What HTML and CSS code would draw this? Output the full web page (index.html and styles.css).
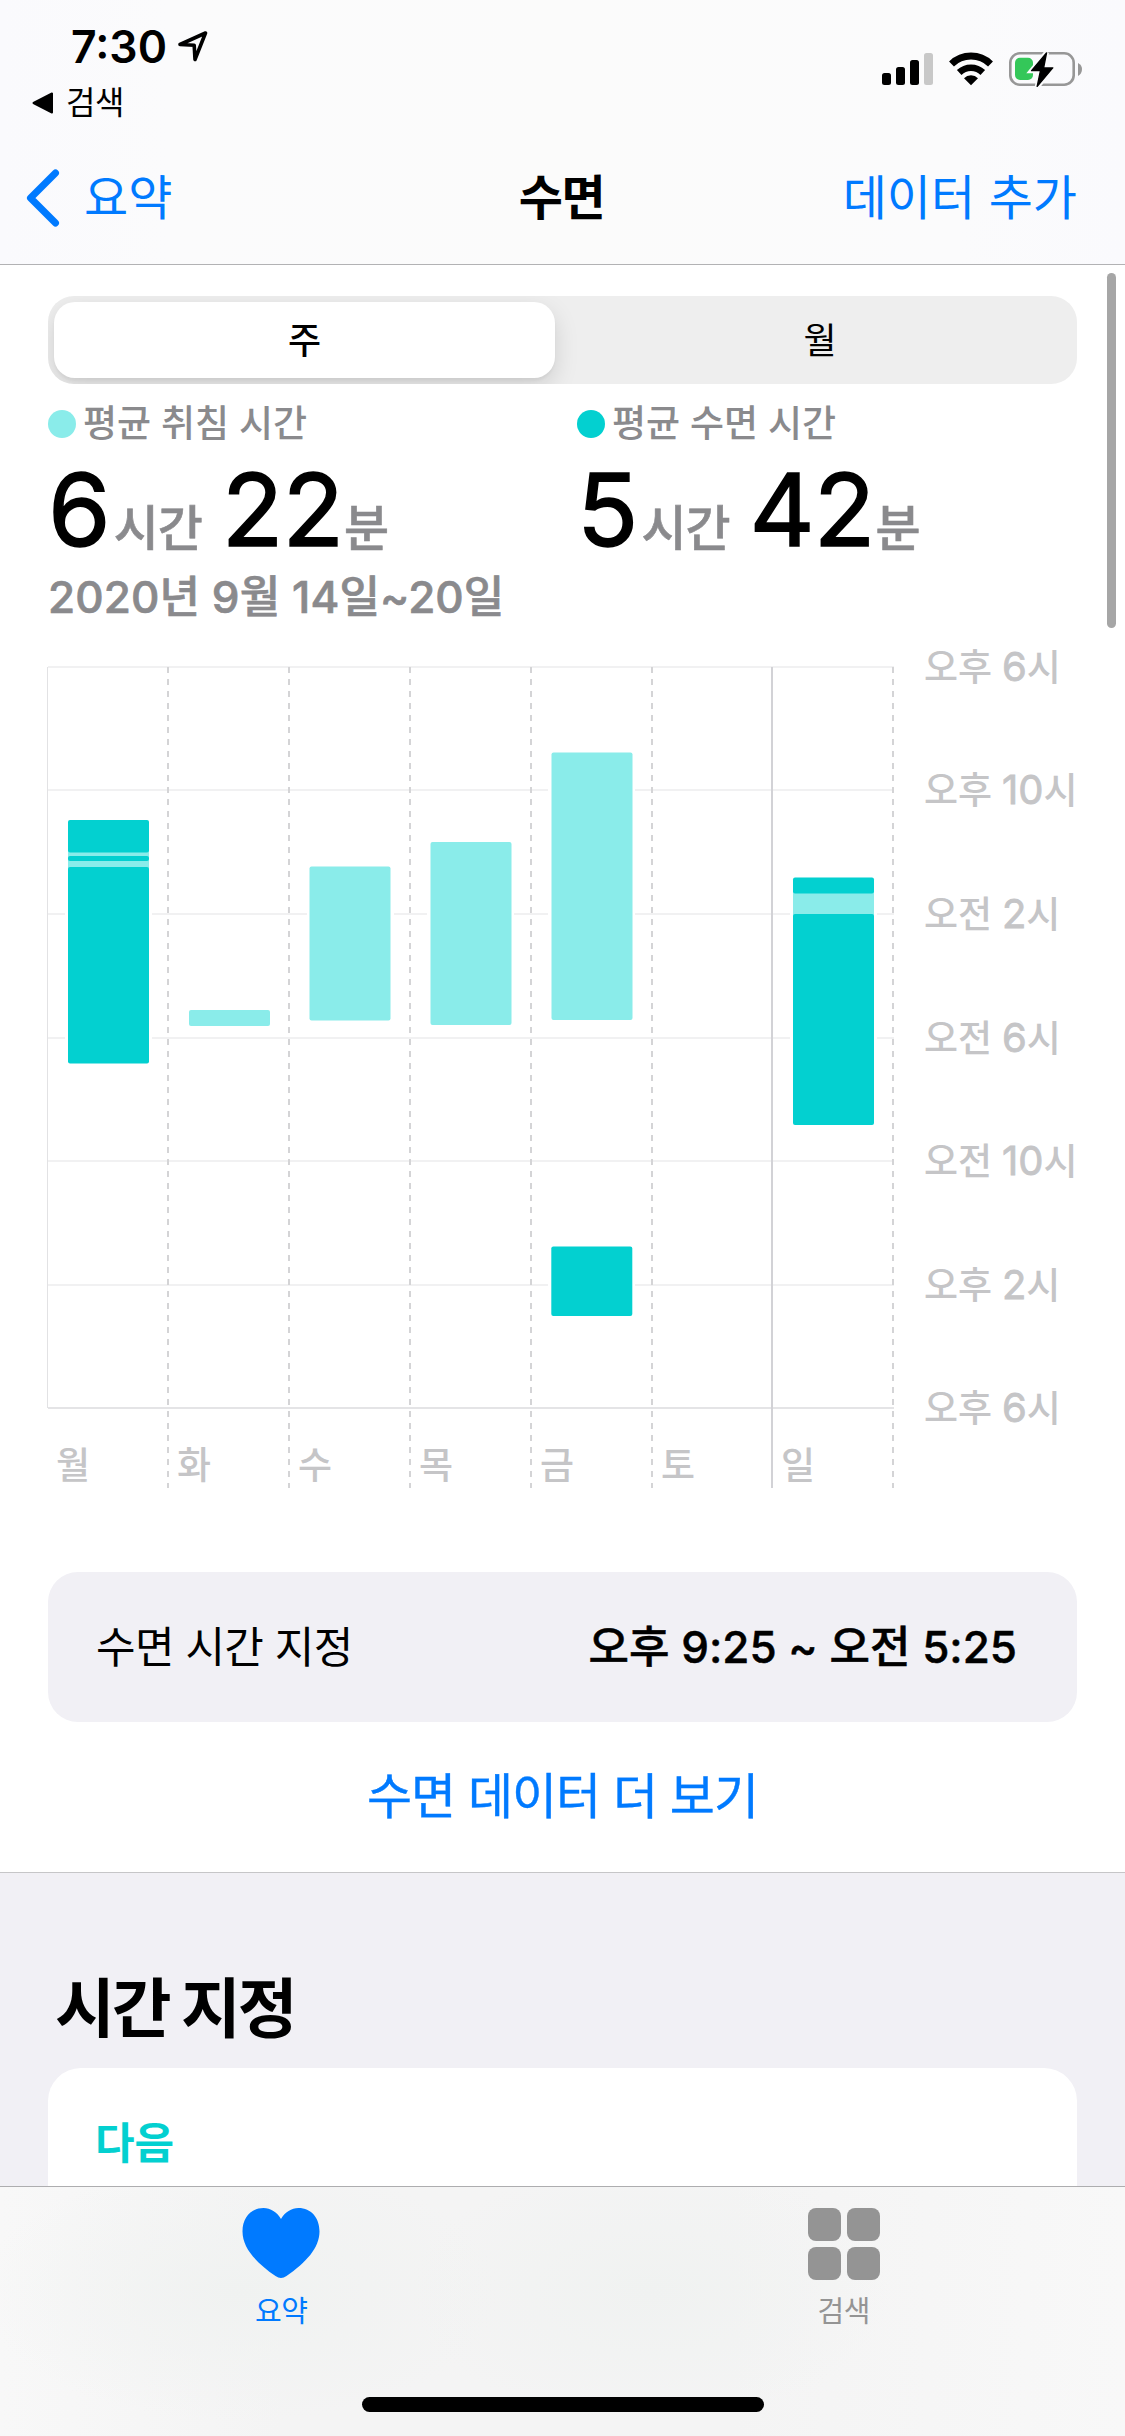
FILE: index.html
```html
<!DOCTYPE html>
<html lang="ko">
	<head>
		<meta charset="UTF-8">
		<title>수면</title>
		<link rel="stylesheet" href="styles.css">
	</head>
	<body>
		<div class="phone">
			<header class="header">
				<div class="status">
					<div class="status-left">
						<div class="clock">
							<span>7:30</span>
							<svg width="30" height="31" viewBox="0 0 30 31">
								<path d="M2 13.5 L27.5 2 L17 28.5 L16.2 14.3 Z" fill="none" stroke="#000" stroke-width="3.6" stroke-linejoin="round"/>
							</svg>
						</div>
						<div class="back-app">
							<svg width="22" height="22" viewBox="0 0 22 22">
								<path d="M1.5 11 L20 1.5 V20.5 Z" stroke="#000" stroke-width="2" stroke-linejoin="round"/>
							</svg>
							<span>검색</span>
						</div>
					</div>
					<div class="status-right">
						<svg width="51" height="36" viewBox="0 0 51 36">
							<rect x="0" y="22" width="9" height="12" rx="2.5"/>
							<rect x="14" y="16" width="9" height="18" rx="2.5"/>
							<rect x="28" y="9" width="9" height="25" rx="2.5"/>
							<rect x="42" y="2" width="9" height="32" rx="2.5" fill="#c8c8c8"/>
						</svg>
						<svg width="46" height="36" viewBox="0 0 46 36">
							<path d="M3.5 13 A28 28 0 0 1 42.5 13" fill="none" stroke="#000" stroke-width="7"/>
							<path d="M11.2 21.5 A17 17 0 0 1 34.8 21.5" fill="none" stroke="#000" stroke-width="6.6"/>
							<path d="M23 34.3 L16 27.2 A10 10 0 0 1 30 27.2 Z"/>
						</svg>
						<svg width="74" height="36" viewBox="0 0 74 36">
							<rect x="1.3" y="2.3" width="63.4" height="31.4" rx="9.5" fill="none" stroke="#979797" stroke-width="2.6"/>
							<rect x="6" y="6.7" width="18" height="22.3" rx="5" fill="#34c759"/>
							<path d="M69 12 Q73 14 73 18 Q73 23 69 25 Z" fill="#979797"/>
							<path d="M37.5 1.6 L22.6 19.8 H31.5 L28.2 36 L43.7 16.7 H34.6 Z" fill="#000" stroke="#fbfbfc" stroke-width="5"/>
							<path d="M37.5 2 L22.6 19.6 H31.5 L28.2 35.4 L43.7 16.9 H34.6 Z" stroke="#000" stroke-width="1.4" stroke-linejoin="round"/>
						</svg>
					</div>
				</div>
				<nav class="nav">
					<a class="nav-back">
						<svg width="34" height="58" viewBox="0 0 34 58">
							<path d="M29.5 4 L4.5 29 L29.5 54" fill="none" stroke="#007aff" stroke-width="7" stroke-linecap="round" stroke-linejoin="round"/>
						</svg>
						<span>요약</span>
					</a>
					<h1>수면</h1>
					<a class="nav-add">데이터 추가</a>
				</nav>
			</header>

			<main class="content">
				<div class="segment">
					<div class="segment-item active">주</div>
					<div class="segment-item">월</div>
				</div>

				<div class="stats">
					<div class="stat">
						<div class="stat-label"><i class="dot light"></i>평균 취침 시간</div>
						<div class="stat-value">6<small>시간</small><b>22</b><small>분</small></div>
					</div>
					<div class="stat">
						<div class="stat-label"><i class="dot"></i>평균 수면 시간</div>
						<div class="stat-value">5<small>시간</small><b>42</b><small>분</small></div>
					</div>
				</div>
				<div class="date">2020년 9월 14일~20일</div>

				<svg class="chart" width="1125" height="872" viewBox="0 630 1125 872">
					<g class="grid">
						<path d="M48 667H894M48 790H894M48 914H894M48 1038H894M48 1161H894M48 1285H894"/>
						<path class="edge" d="M47.5 667V1408"/>
						<path class="base" d="M48 1408H894"/>
						<path class="dash" d="M168 667V1488M289 667V1488M410 667V1488M531 667V1488M652 667V1488M893 667V1488"/>
						<path class="week" d="M772 667V1488"/>
					</g>
					<!-- 막대 주위 흰 여백 -->
					<g fill="#fff">
						<rect x="65" y="817" width="87" height="250"/>
						<rect x="307" y="863" width="87" height="160"/>
						<rect x="427" y="839" width="87" height="189"/>
						<rect x="548" y="749" width="87" height="274"/>
						<rect x="548" y="1243" width="87" height="76"/>
						<rect x="790" y="874" width="87" height="254"/>
					</g>
					<g class="in-bed">
						<rect x="68" y="850" width="81" height="20"/>
						<rect x="189" y="1010" width="81" height="16" rx="2"/>
						<rect x="309.5" y="866.5" width="81" height="154" rx="2"/>
						<rect x="430.5" y="842" width="81" height="183" rx="2"/>
						<rect x="551.5" y="752.5" width="81" height="267.5" rx="2"/>
						<rect x="793" y="890" width="81" height="28"/>
					</g>
					<g class="asleep">
						<rect x="68" y="820" width="81" height="32.5" rx="2"/>
						<rect x="68" y="856" width="81" height="5" rx="2"/>
						<rect x="68" y="867" width="81" height="196.5" rx="2"/>
						<rect x="551.3" y="1246.5" width="81" height="69.5" rx="2"/>
						<rect x="793" y="877.5" width="81" height="16" rx="2"/>
						<rect x="793" y="914" width="81" height="211" rx="2"/>
					</g>
					<g class="hours">
						<text x="924" y="681">오후 <tspan>6</tspan>시</text>
						<text x="924" y="804">오후 <tspan>10</tspan>시</text>
						<text x="924" y="928">오전 <tspan>2</tspan>시</text>
						<text x="924" y="1052">오전 <tspan>6</tspan>시</text>
						<text x="924" y="1175">오전 <tspan>10</tspan>시</text>
						<text x="924" y="1299">오후 <tspan>2</tspan>시</text>
						<text x="924" y="1422">오후 <tspan>6</tspan>시</text>
					</g>
					<g class="days">
						<text x="56" y="1479">월</text>
						<text x="177" y="1479">화</text>
						<text x="298" y="1479">수</text>
						<text x="419" y="1479">목</text>
						<text x="540" y="1479">금</text>
						<text x="661" y="1479">토</text>
						<text x="781" y="1479">일</text>
					</g>
				</svg>

				<div class="schedule">
					<span>수면 시간 지정</span>
					<strong>오후 9:25 ~ 오전 5:25</strong>
				</div>
				<a class="more">수면 데이터 더 보기</a>

				<section class="next">
					<h2>시간 지정</h2>
					<div class="next-card">다음</div>
				</section>
			</main>

			<footer class="tabbar">
				<a class="tab active">
					<svg width="78" height="72" viewBox="0 0 78 72">
						<path d="M39 11 C35 4 28.500 0 21.500 0 C9 0 .5 9.500 .5 23.500 C.5 40 14 54.500 33.500 68 Q39 72 44.500 68 C64 54.500 77.500 40 77.500 23.500 C77.500 9.500 69 0 56.500 0 C49.500 0 43 4 39 11 Z" fill="#007aff"/>
					</svg>
					<span>요약</span>
				</a>
				<a class="tab">
					<svg width="72" height="72" viewBox="0 0 72 72" fill="#949494">
						<rect x="0" y="0" width="33" height="33" rx="8"/>
						<rect x="39" y="0" width="33" height="33" rx="8"/>
						<rect x="0" y="39" width="33" height="33" rx="8"/>
						<rect x="39" y="39" width="33" height="33" rx="8"/>
					</svg>
					<span>검색</span>
				</a>
				<div class="home"></div>
			</footer>
			<div class="scrollbar"></div>
		</div>
	</body>
</html>
```
FILE: styles.css
```css
*{
	margin: 0;
	padding: 0;
	box-sizing: border-box;
}
body{
	font-family: Inter, "Noto Sans CJK KR", sans-serif;
	color: #000;
	background: #fff;
}
svg{
	display: block;
	flex-shrink: 0;
}
.phone{
	width: 1125px;
	height: 2436px;
	position: relative;
	overflow: hidden;
	display: flex;
	flex-direction: column;
}

/* 상단 */
.header{
	height: 265px;
	flex-shrink: 0;
	background: linear-gradient(90deg, #fafafd, #fbfbfc 15%, #fbfbfb 50%, #fbfbfc 85%, #fafafd);
	border-bottom: 1px solid #b2b2b4;
}
.status{
	height: 132px;
	display: flex;
	justify-content: space-between;
	padding: 21px 42px 0 32px;
}
.clock{
	display: flex;
	align-items: center;
	gap: 11px;
	padding-left: 39px;
	font-size: 44.5px;
	font-weight: 600;
	line-height: 52px;
}
.clock svg{
	margin-bottom: 1px;
}
.back-app{
	display: flex;
	align-items: center;
	gap: 12px;
	margin-top: 10px;
	font-size: 32px;
	line-height: 40px;
	letter-spacing: -.5px;
}
.status-right{
	display: flex;
	gap: 15px;
	padding-top: 30px;
}
.nav{
	height: 132px;
	display: grid;
	grid-template-columns: 1fr auto 1fr;
	align-items: center;
	padding: 0 28px 0 26px;
	font-size: 48px;
	line-height: 60px;
	color: #007aff;
}
.nav-back{
	display: flex;
	align-items: center;
	gap: 24px;
}
.nav h1{
	font-size: 48px;
	font-weight: 600;
	color: #000;
	letter-spacing: -1.5px;
}
.nav-add{
	margin-right: 20px;
	text-align: right;
}

/* 본문 */
.content{
	flex: 1;
	min-height: 0;
	overflow: hidden;
	padding-top: 31px;
}
.segment{
	height: 88px;
	margin: 0 48px;
	padding: 6px;
	display: flex;
	background: #eee;
	border-radius: 26px;
	overflow: hidden;
}
.segment-item{
	flex: 1;
	padding-left: 14px;
	font-size: 36px;
	line-height: 78px;
	text-align: center;
}
.segment-item.active{
	flex: 0 0 501px;
	padding-left: 0;
	font-weight: 500;
	background: #fff;
	border-radius: 21px;
	box-shadow: 0 9px 24px rgba(0,0,0,.13), 0 3px 3px rgba(0,0,0,.04);
}
.stats{
	display: grid;
	grid-template-columns: 529px 1fr;
	padding: 20px 0 0 48px;
}
.stat-label{
	display: flex;
	align-items: center;
	font-size: 37px;
	font-weight: 500;
	line-height: 40px;
	color: #8a8a8d;
}
.dot{
	width: 28px;
	height: 28px;
	margin-right: 7px;
	border-radius: 50%;
	background: #03d0d0;
}
.dot.light{
	background: #8aecea;
}
.stat-value{
	margin-top: 15px;
	font-size: 101px;
	line-height: 100px;
	letter-spacing: -1px;
	white-space: nowrap;
	-webkit-text-stroke: 1.5px #000;
	stroke-linejoin: round;
}
.stat-value b{
	font-weight: inherit;
	margin-left: 20px;
}
.stat-value small{
	margin-left: 4px;
	font-size: 49px;
	font-weight: 500;
	line-height: 1;
	color: #8a8a8d;
	-webkit-text-stroke: .6px #8a8a8d;
}
.stat-value b + small{
	margin-left: 1px;
}
.date{
	margin: 13px 0 0 48px;
	font-size: 44px;
	font-weight: 500;
	line-height: 50px;
	letter-spacing: .1px;
	color: #8a8a8d;
	-webkit-text-stroke: .7px #8a8a8d;
}

/* 차트 */
.chart{
	margin-top: 8px;
}
.grid path{
	fill: none;
	stroke: #f1f1f2;
	stroke-width: 2;
}
.grid .edge{
	stroke: #e2e2e4;
	stroke-width: 1;
}
.grid .base{
	stroke: #e4e4e6;
}
.grid .dash{
	stroke: #d4d4d6;
	stroke-dasharray: 6 6;
}
.grid .week{
	stroke: #d2d2d6;
}
.in-bed{
	fill: #8aecea;
}
.asleep{
	fill: #03d0d0;
}
.hours text,
.days text{
	font-size: 37px;
	font-weight: 500;
	fill: #c5c5c7;
}
.hours tspan{
	font-size: 40px;
	font-weight: 400;
	stroke: #c5c5c7;
	stroke-width: .8px;
}

.schedule{
	height: 150px;
	margin: 70px 48px 0;
	padding: 0 60px 0 48px;
	display: flex;
	align-items: center;
	justify-content: space-between;
	font-size: 43px;
	line-height: 50px;
	letter-spacing: -.6px;
	background: #f1f0f5;
	border-radius: 30px;
}
.schedule strong{
	font-size: 44px;
	font-weight: 500;
	letter-spacing: 0;
	-webkit-text-stroke: .5px #000;
}
.more{
	display: block;
	margin-top: 45px;
	font-size: 49px;
	line-height: 60px;
	letter-spacing: -1px;
	text-align: center;
	color: #007aff;
	-webkit-text-stroke: .4px #007aff;
}
.next{
	height: 400px;
	margin-top: 45px;
	padding: 96px 48px 0;
	border-top: 1px solid #c6c6c8;
	background: #f1f0f5;
}
.next h2{
	padding-left: 7px;
	font-size: 65px;
	font-weight: 700;
	line-height: 80px;
	letter-spacing: -3px;
}
.next-card{
	height: 300px;
	margin-top: 19px;
	padding: 50px 47px;
	font-size: 43px;
	font-weight: 700;
	line-height: 50px;
	color: #03d0d0;
	background: #fff;
	border-radius: 33px;
}

/* 하단 탭 */
.tabbar{
	height: 250px;
	flex-shrink: 0;
	display: grid;
	grid-template-columns: 1fr 1fr;
	grid-template-rows: 210px 15px;
	border-top: 1px solid #adadaf;
	background:
		radial-gradient(ellipse 260px 130px at 240px 105px, #f0f2f1, rgba(243,243,243,0)),
		radial-gradient(ellipse 240px 130px at 650px 105px, #f0f2f1, rgba(243,243,243,0)),
		linear-gradient(90deg, #f8f8f8, #f4f4f4 25%, #f4f4f4 65%, #f8f8f8);
}
.tab{
	display: flex;
	flex-direction: column;
	align-items: center;
	padding-top: 21px;
	font-size: 29px;
	line-height: 34px;
	letter-spacing: -.5px;
	color: #949494;
}
.tab span{
	margin-top: 15px;
}
.tab.active{
	color: #007aff;
}
.home{
	grid-column: 1 / 3;
	justify-self: center;
	width: 402px;
	height: 15px;
	border-radius: 8px;
	background: #000;
}
.scrollbar{
	position: absolute;
	top: 273px;
	right: 9px;
	width: 9px;
	height: 355px;
	border-radius: 5px;
	background: #a6a6a6;
}
```
